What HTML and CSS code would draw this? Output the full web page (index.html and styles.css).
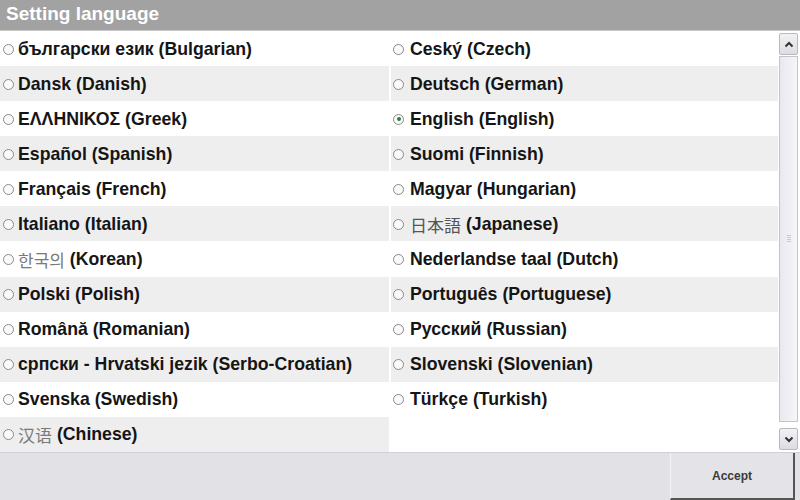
FILE: index.html
```html
<!DOCTYPE html>
<html>
<head>
<meta charset="utf-8">
<link rel="stylesheet" href="styles.css">
</head>
<body>
<div class="screen">
  <div class="title">Setting language</div>
  <div class="main">
    <div class="list">
      <div class="cell odd"><span class="radio"></span>български език (Bulgarian)</div>
      <div class="cell odd"><span class="radio"></span>Ceský (Czech)</div>
      <div class="cell even"><span class="radio"></span>Dansk (Danish)</div>
      <div class="cell even"><span class="radio"></span>Deutsch (German)</div>
      <div class="cell odd"><span class="radio"></span>ΕΛΛΗΝΙΚΟΣ (Greek)</div>
      <div class="cell odd"><span class="radio on"></span>English (English)</div>
      <div class="cell even"><span class="radio"></span>Español (Spanish)</div>
      <div class="cell even"><span class="radio"></span>Suomi (Finnish)</div>
      <div class="cell odd"><span class="radio"></span>Français (French)</div>
      <div class="cell odd"><span class="radio"></span>Magyar (Hungarian)</div>
      <div class="cell even"><span class="radio"></span>Italiano (Italian)</div>
      <div class="cell even"><span class="radio"></span><span class="cjk jp">日本語</span>&nbsp;(Japanese)</div>
      <div class="cell odd"><span class="radio"></span><span class="cjk kr">한국의</span>&nbsp;(Korean)</div>
      <div class="cell odd"><span class="radio"></span>Nederlandse taal (Dutch)</div>
      <div class="cell even"><span class="radio"></span>Polski (Polish)</div>
      <div class="cell even"><span class="radio"></span>Português (Portuguese)</div>
      <div class="cell odd"><span class="radio"></span>Română (Romanian)</div>
      <div class="cell odd"><span class="radio"></span>Русский (Russian)</div>
      <div class="cell even"><span class="radio"></span>српски - Hrvatski jezik (Serbo-Croatian)</div>
      <div class="cell even"><span class="radio"></span>Slovenski (Slovenian)</div>
      <div class="cell odd"><span class="radio"></span>Svenska (Swedish)</div>
      <div class="cell odd"><span class="radio"></span>Türkçe (Turkish)</div>
      <div class="cell even"><span class="radio"></span><span class="cjk sc">汉语</span>&nbsp;(Chinese)</div>
      <div class="cell blank"></div>
    </div>
    <div class="scrollbar">
      <div class="sbtn up"><svg width="10" height="7" viewBox="0 0 10 7"><path d="M1.5 5.5 L5 2 L8.5 5.5" fill="none" stroke="#333" stroke-width="2"/></svg></div>
      <div class="track"><span class="grip"></span></div>
      <div class="sbtn down"><svg width="10" height="7" viewBox="0 0 10 7"><path d="M1.5 1.5 L5 5 L8.5 1.5" fill="none" stroke="#333" stroke-width="2"/></svg></div>
    </div>
  </div>
  <div class="footer">
    <div class="spacer"></div>
    <div class="accept">Accept</div>
  </div>
</div>
</body>
</html>
```
FILE: styles.css
```css
html, body {
  margin: 0;
  padding: 0;
  background: #ffffff;
}
.screen {
  width: 800px;
  height: 500px;
  display: flex;
  flex-direction: column;
  font-family: "Liberation Sans", Arial, sans-serif;
  overflow: hidden;
}
.title {
  height: 31px;
  background: #a2a2a2;
  color: #ffffff;
  font-weight: bold;
  font-size: 19px;
  line-height: 28px;
  padding-left: 6px;
  box-sizing: border-box;
  border-bottom: 1px solid #c8c8c8;
}
.main {
  height: 421px;
  display: flex;
}
.list {
  width: 778px;
  display: grid;
  grid-template-columns: 389px 387px;
  grid-auto-rows: 35.08px;
  column-gap: 2px;
  background: #ffffff;
}
.cell {
  display: flex;
  align-items: center;
  padding-left: 3px;
  padding-top: 1px;
  box-sizing: border-box;
  font-size: 17.7px;
  font-weight: bold;
  color: #151515;
  white-space: nowrap;
}
.cell:nth-child(even) {
  padding-left: 2px;
}
.cell:nth-child(even) .radio {
  margin-right: 6px;
}
.cell.even {
  background: #eeeeee;
}
.cell.odd, .cell.blank {
  background: #ffffff;
}
.radio {
  width: 9px;
  height: 9px;
  border: 1.5px solid #8a8a8a;
  border-radius: 50%;
  margin-right: 4px;
  flex: none;
  position: relative;
  background: #fafafa;
}
.radio.on::after {
  content: "";
  position: absolute;
  left: 2.5px;
  top: 2.5px;
  width: 4px;
  height: 4px;
  border-radius: 50%;
  background: #2f7d3c;
}
.cjk {
  color: #7a7a7a;
  font-weight: normal;
  font-size: 17px;
}
.cjk.jp { font-family: "Noto Sans CJK JP", sans-serif; color: #555; }
.cjk.kr { font-family: "Noto Sans CJK KR", sans-serif; }
.cjk.sc { font-family: "Noto Sans CJK SC", sans-serif; }
.scrollbar {
  width: 22px;
  display: flex;
  flex-direction: column;
  padding: 2px 2px 2px 1px;
  box-sizing: border-box;
  background: #ffffff;
}
.sbtn {
  height: 20px;
  background: linear-gradient(#f2f2f5, #dcdce2);
  border: 1px solid #b8b8c0;
  border-radius: 2px;
  display: flex;
  align-items: center;
  justify-content: center;
}
.track {
  flex: 1;
  margin: 1px 0 6px;
  border: 1px solid #c4c4cc;
  background: linear-gradient(90deg, #e8e8ee, #f6f6f9);
  display: flex;
  align-items: center;
  justify-content: center;
}
.grip {
  width: 4px;
  height: 8px;
  background: repeating-linear-gradient(#c8c8d0 0 1px, transparent 1px 2px);
}
.footer {
  height: 48px;
  display: flex;
  background: #e2e2e6;
  border-top: 1px solid #d0d0d6;
  box-sizing: border-box;
}
.spacer {
  flex: 1;
}
.accept {
  width: 125px;
  margin-right: 5px;
  border-left: 1px solid #f4f4f6;
  border-right: 2px solid #555;
  border-bottom: 2px solid #555;
  background: #e4e4e8;
  display: flex;
  align-items: center;
  justify-content: center;
  font-size: 12px;
  font-weight: bold;
  color: #3a3a3a;
  font-family: "Liberation Sans", Arial, sans-serif;
  box-sizing: border-box;
}
```
